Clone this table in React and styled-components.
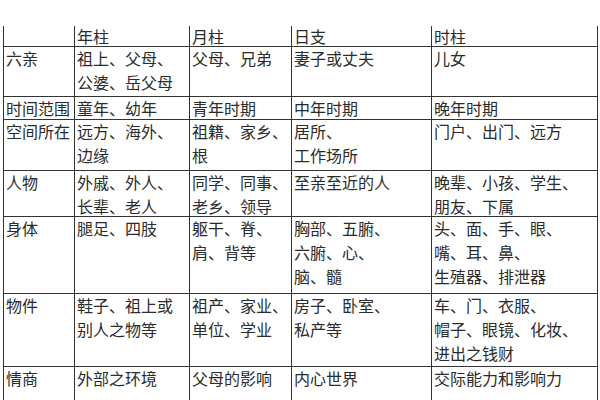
import React from "react";
import styled, { createGlobalStyle } from "styled-components";

const GlobalStyle = createGlobalStyle`
  html, body {
    margin: 0;
    padding: 0;
    background: #ffffff;
    overflow: hidden;
  }
  body {
    font-family: "Noto Sans CJK SC", "Noto Sans", sans-serif;
  }
`;

const Page = styled.div`
  width: 600px;
  height: 400px;
  padding: 26px 0 0 3px;
  box-sizing: border-box;
  overflow: hidden;
`;

const Table = styled.table`
  border-collapse: collapse;
  table-layout: fixed;
  width: 594px;
  color: #2b2b2b;
  font-size: 16px;
`;

const Cell = styled.td`
  border: 1px solid #333;
  border-top: ${(p) => (p.$head ? "none" : "1px solid #333")};
  padding: 0 2px;
  vertical-align: top;
  white-space: nowrap;
`;

// fixed-height box so the text may run close to the bottom line, as in the scan
const Content = styled.div`
  height: ${(p) => p.$h - 1}px;
  line-height: ${(p) => (p.$head ? 18 : 24)}px;
  padding-top: ${(p) => (p.$head ? 1 : 0)}px;
  box-sizing: border-box;
`;

const Line = styled.div`
  position: relative;
  top: -1px;
`;

const widths = [71, 115, 102, 140, 166];

const header = ["", "年柱", "月柱", "日支", "时柱"];

const rows = [
  {
    h: 50,
    cells: [
      ["六亲"],
      ["祖上、父母、", "公婆、岳父母"],
      ["父母、兄弟"],
      ["妻子或丈夫"],
      ["儿女"],
    ],
  },
  {
    h: 23,
    cells: [["时间范围"], ["童年、幼年"], ["青年时期"], ["中年时期"], ["晚年时期"]],
  },
  {
    h: 51,
    cells: [
      ["空间所在"],
      ["远方、海外、", "边缘"],
      ["祖籍、家乡、", "根"],
      ["居所、", "工作场所"],
      ["门户、出门、远方"],
    ],
  },
  {
    h: 46,
    cells: [
      ["人物"],
      ["外戚、外人、", "长辈、老人"],
      ["同学、同事、", "老乡、领导"],
      ["至亲至近的人"],
      ["晚辈、小孩、学生、", "朋友、下属"],
    ],
  },
  {
    h: 77,
    cells: [
      ["身体"],
      ["腿足、四肢"],
      ["躯干、脊、", "肩、背等"],
      ["胸部、五腑、", "六腑、心、", "脑、髓"],
      ["头、面、手、眼、", "嘴、耳、鼻、", "生殖器、排泄器"],
    ],
  },
  {
    h: 73,
    cells: [
      ["物件"],
      ["鞋子、祖上或", "别人之物等"],
      ["祖产、家业、", "单位、学业"],
      ["房子、卧室、", "私产等"],
      ["车、门、衣服、", "帽子、眼镜、化妆、", "进出之钱财"],
    ],
  },
  {
    h: 50,
    cells: [["情商"], ["外部之环境"], ["父母的影响"], ["内心世界"], ["交际能力和影响力"]],
  },
];

export default function App() {
  return (
    <>
      <GlobalStyle />
      <Page>
        <Table>
          <colgroup>
            {widths.map((w, i) => (
              <col key={i} style={{ width: w }} />
            ))}
          </colgroup>
          <tbody>
            <tr>
              {header.map((t, i) => (
                <Cell key={i} $head>
                  <Content $h={21} $head>
                    {t}
                  </Content>
                </Cell>
              ))}
            </tr>
            {rows.map((r, i) => (
              <tr key={i}>
                {r.cells.map((lines, j) => (
                  <Cell key={j}>
                    <Content $h={r.h}>
                      {lines.map((l, k) => (
                        <Line key={k}>{l}</Line>
                      ))}
                    </Content>
                  </Cell>
                ))}
              </tr>
            ))}
          </tbody>
        </Table>
      </Page>
    </>
  );
}
